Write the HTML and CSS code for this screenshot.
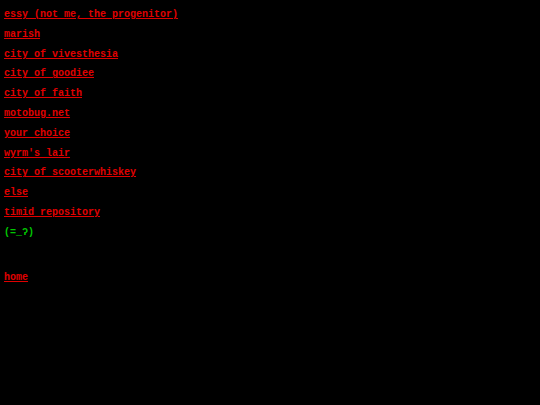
FILE: index.html
```html
<!DOCTYPE html>
<html>
<head>
<meta charset="utf-8">
<link rel="stylesheet" href="styles.css">
</head>
<body>
<nav class="links">
<a href="#">essy (not me, the progenitor)</a>
<a href="#">marish</a>
<a href="#">city of vivesthesia</a>
<a href="#">city of goodiee</a>
<a href="#">city of faith</a>
<a href="#">motobug.net</a>
<a href="#">your choice</a>
<a href="#">wyrm's lair</a>
<a href="#">city of scooterwhiskey</a>
<a href="#">else</a>
<a href="#">timid repository</a>
<span class="face">(=_ʔ)</span>
</nav>
<div class="home"><a href="#">home</a></div>
</body>
</html>
```
FILE: styles.css
```css
html { background: #000; }
body {
  margin: 5px 4px 4px;
  background: #000;
  font-family: "Liberation Mono", "Courier New", monospace;
  font-weight: bold;
  font-size: 10px;
  line-height: 19.8px;
}
.links {
  display: flex;
  flex-direction: column;
  align-items: flex-start;
}
a { color: #e00000; text-decoration: underline; }
.face { color: #00c800; }
.home { margin-top: 25px; }
```
